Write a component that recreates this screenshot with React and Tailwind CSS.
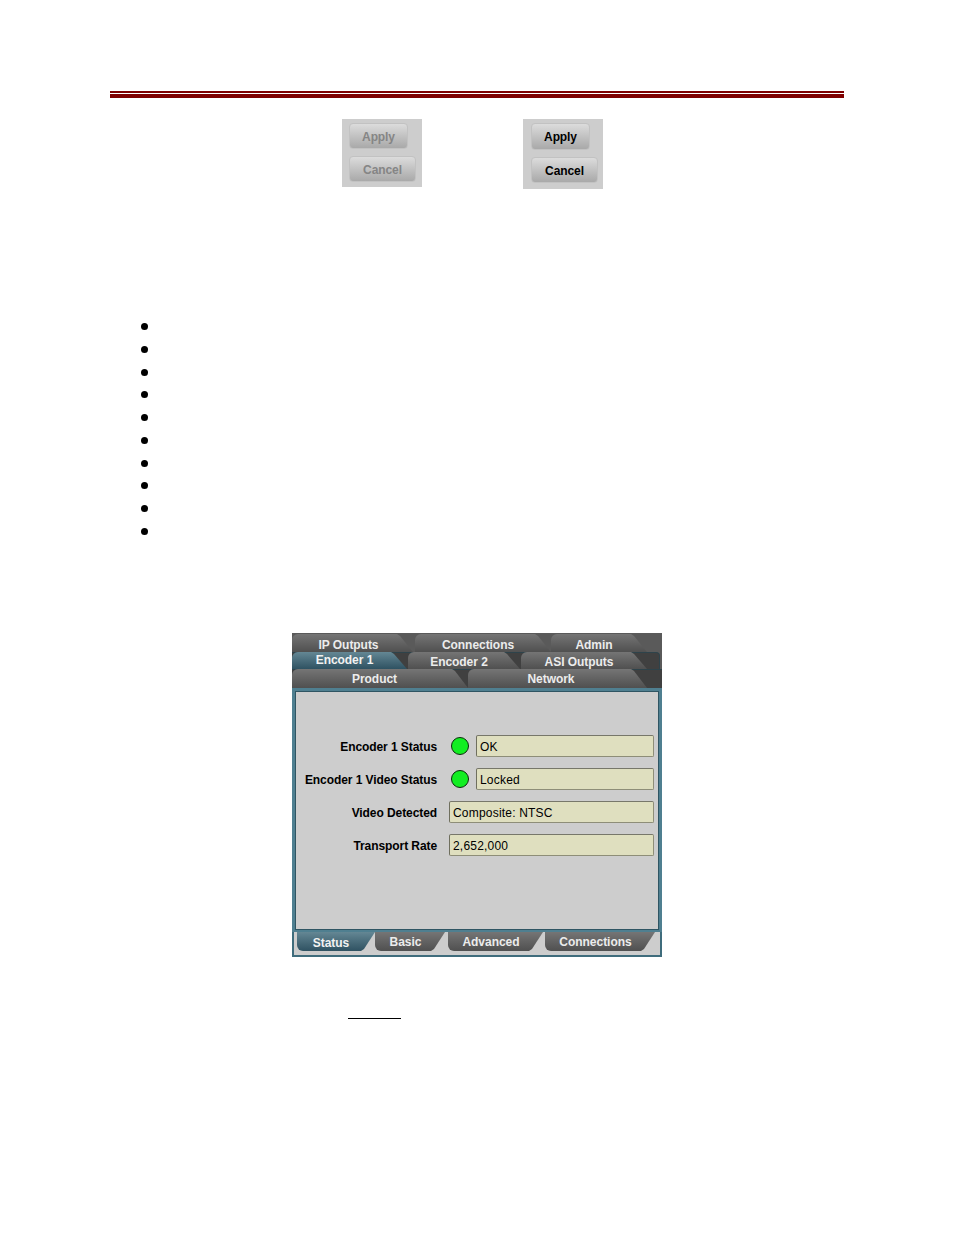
const btnBase = "flex items-center justify-center rounded-[4px] border border-[#c2c2c2] bg-gradient-to-b from-[#dcdcdc] to-[#a9a9a9] text-[12px] font-bold tracking-[-0.1px]";

function ButtonPanel({ dim, panelH, applyH, gap }) {
  const text = dim ? "text-[#858585] pt-px" : "text-black pt-px";
  return (
    <div className={`w-20 bg-[#cdcdcd] ${panelH} ${dim ? "pl-[7px]" : "pl-2"} pt-1`}>
      <div className={`${btnBase} ${text} w-[59px] ${applyH}`}>Apply</div>
      <div className={`${btnBase} ${text} w-[67px] h-[26px] ${gap}`}>Cancel</div>
    </div>
  );
}

const slant13 = "[clip-path:polygon(0_0,calc(100%-16px)_0,calc(100%-13px)_2px,100%_100%,0_100%)]";
const grey = "bg-gradient-to-b from-[#757575] to-[#505050] text-[#ececec]";
const teal = "bg-gradient-to-b from-[#648794] to-[#2f5262] text-[#f2f2f2]";
const tabBase = "flex items-center justify-center rounded-t-[6px] text-[12px] font-bold leading-none tracking-[-0.05px]";

function Tab({ label, cls, shift = "" }) {
  return (
    <div className={`${tabBase} ${slant13} ${cls}`}>
      <span className={shift}>{label}</span>
    </div>
  );
}

function Row({ label, led, value }) {
  return (
    <div className="flex h-[22px] items-center">
      <div className="w-[142px] pt-px text-right text-[12px] font-bold tracking-[-0.08px] text-black">{label}</div>
      {led ? (
        <>
          <div className="ml-[14px] h-[18px] w-[18px] rounded-full border border-[#0c2c0c] bg-[#12ee22]" />
          <Field cls="ml-[7px] w-[178px]" value={value} />
        </>
      ) : (
        <Field cls="ml-3 w-[205px]" value={value} />
      )}
    </div>
  );
}

function Field({ cls, value }) {
  return (
    <div className={`flex h-[22px] items-center rounded-[2px] border border-[#8e8e78] border-l-[#6f6f5e] border-t-[#77776a] bg-[#dfdfbf] pl-[3px] pt-px text-[12px] tracking-[0.2px] text-black ${cls}`}>
      {value}
    </div>
  );
}

const bottomBase = "flex h-[19px] items-center justify-center rounded-b-[6px] text-[12px] font-bold leading-none tracking-[-0.03px] [clip-path:polygon(0_0,100%_0,calc(100%-11px)_calc(100%-2px),calc(100%-14px)_100%,0_100%)]";

const bullets = [326, 349, 372, 394, 417, 440, 463, 486, 509, 531];

export default function App() {
  return (
    <div className="relative h-[1235px] w-[954px] overflow-hidden bg-white font-['Liberation_Sans',Arial,sans-serif]">
      <div className="px-[110px] pt-[91px]">
        <div className="h-[2px] bg-[#7f0000]" />
        <div className="mt-px h-1 bg-[#7f0000]" />
      </div>

      <div className="mt-[21px] flex items-start pl-[342px]">
        <ButtonPanel dim panelH="h-[68px]" applyH="h-[26px]" gap="mt-[7px]" />
        <div className="ml-[101px]">
          <ButtonPanel panelH="h-[70px]" applyH="h-[27px]" gap="mt-[7px]" />
        </div>
      </div>

      <ul className="mt-[134px] flex h-[212px] flex-col justify-between pl-[141px]">
        {bullets.map((y) => (
          <li key={y} className="h-[7px] w-[7px] rounded-full bg-black" />
        ))}
      </ul>

      <div className="ml-[292px] mt-[98px] w-[370px] bg-[#cdcdcd]">
        <div className="bg-[#5a5a5a]">
          <div className="flex h-[19px] bg-[#5a5a5a] pt-px">
            <Tab label="IP Outputs" cls={`w-[121px] ${grey}`} shift="pr-[8px] pt-[3px]" />
            <Tab label="Connections" cls={`ml-[2px] w-[136px] ${grey}`} shift="pr-[10px] pt-[3px]" />
            <Tab label="Admin" cls={`w-[96px] ${grey}`} shift="pr-[10px] pt-[3px]" />
          </div>
          <div className="mr-[2px] flex h-[17px] gap-px rounded-tr-[4px] border-r border-t border-[#2e434b] bg-[#404040]">
            <Tab label="Encoder 1" cls={`-mt-px h-[17px] w-[115px] ${teal}`} shift="pb-[2px] pr-[10px]" />
            <Tab label="Encoder 2" cls={`-mt-px h-[17px] w-[112px] ${grey}`} shift="pt-[2px] pr-[10px]" />
            <Tab label="ASI Outputs" cls={`-mt-px h-[17px] w-[126px] ${grey}`} shift="pt-[2px] pr-[10px]" />
          </div>
          <div className="flex h-[19px] border-t border-[#2e434b] bg-[#404040]">
            <Tab label="Product" cls={`-mt-px h-[19px] w-[176px] ${grey}`} shift="pr-[11px]" />
            <Tab label="Network" cls={`-mt-px h-[19px] w-[179px] ${grey}`} shift="pr-[13px]" />
          </div>
        </div>

        <div className="flex h-[244px] flex-col gap-[11px] border-x-[3px] border-t-[3px] border-b-2 border-[#4f7f90] bg-[#cdcdcd] pt-[44px] shadow-[inset_0_0_0_1px_#2f5563]">
          <Row label="Encoder 1 Status" led value="OK" />
          <Row label="Encoder 1 Video Status" led value="Locked" />
          <Row label="Video Detected" value="Composite: NTSC" />
          <Row label="Transport Rate" value="2,652,000" />
        </div>

        <div className="h-[25px] border-x-2 border-b-2 border-[#3f6c7c] bg-[#cdcdcd] pl-[3px]">
          <div className="flex">
            <div className={`${bottomBase} w-[78px] ${teal}`}><span className="pt-[2px] pr-[10px]">Status</span></div>
            <div className={`${bottomBase} w-[70px] ${grey}`}><span className="pr-[9px]">Basic</span></div>
            <div className={`${bottomBase} ml-[3px] w-[95px] ${grey}`}><span className="pr-[9px]">Advanced</span></div>
            <div className={`${bottomBase} ml-[2px] w-[110px] ${grey}`}><span className="pr-[9px]">Connections</span></div>
          </div>
        </div>
      </div>

      <div className="ml-[348px] mt-[61px] h-px w-[53px] bg-black" />
    </div>
  );
}
